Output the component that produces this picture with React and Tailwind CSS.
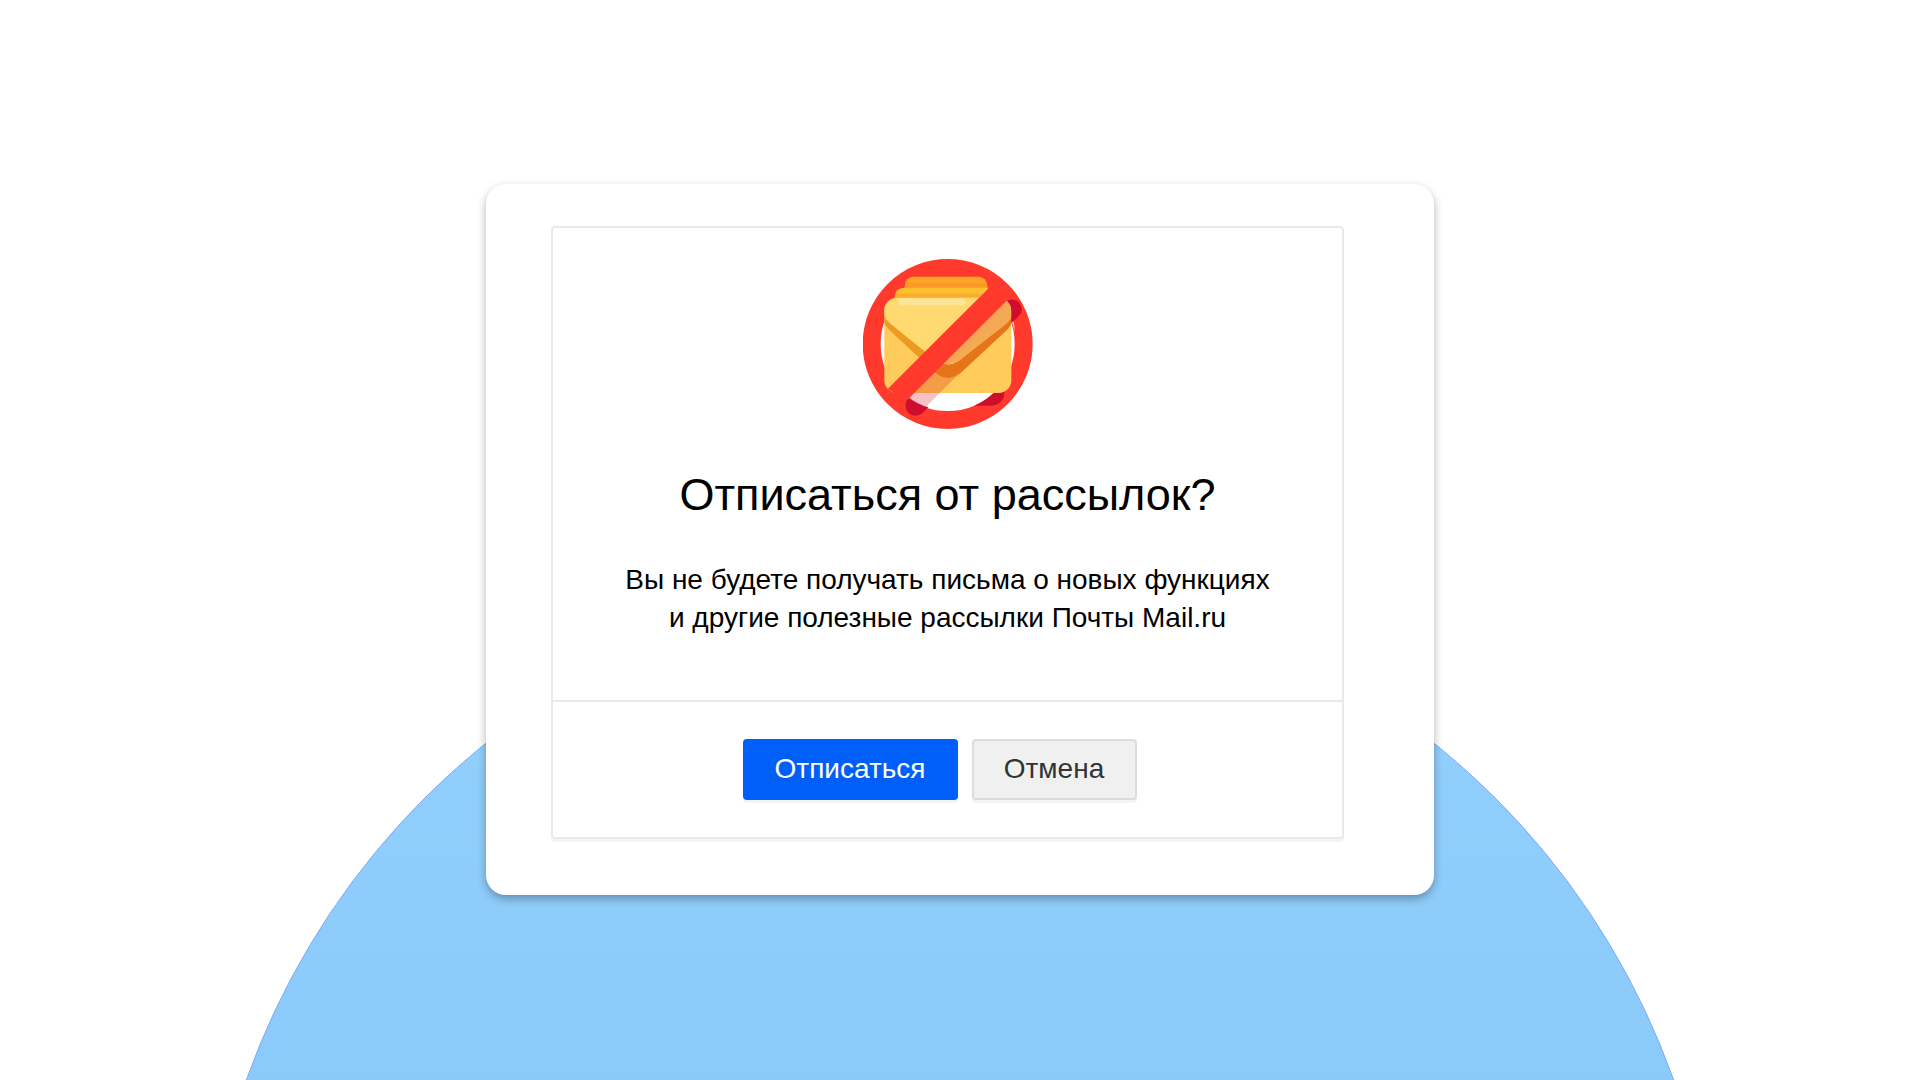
import React from "react";

const NoMailIcon = () => {
  return (
    <svg
      viewBox="38 42 510 510"
      className="w-[170px] h-[170px]"
      aria-hidden="true"
    >
      <defs>
        <clipPath id="ring">
          <path
            clipRule="evenodd"
            d="M292 42a255 255 0 1 0 0.1 0zM292 97a201 201 0 1 1 -0.1 0z"
          />
        </clipPath>
        <linearGradient id="back" x1="0" y1="0" x2="0" y2="1">
          <stop offset="0.45" stopColor="#ffa425" />
          <stop offset="0.6" stopColor="#fb9826" />
        </linearGradient>
        <linearGradient id="middle" x1="0" y1="0" x2="0" y2="1">
          <stop offset="0.45" stopColor="#ffc02d" />
          <stop offset="0.6" stopColor="#f9ad2e" />
        </linearGradient>
      </defs>

      {/* ring */}
      <circle cx="292" cy="297" r="228" fill="none" stroke="#ff3a2d" strokeWidth="54" />
      <g clipPath="url(#ring)">
        <path d="M370 482h54a38 38 0 0 0 38-42h-60z" fill="#cf0d2f" />
      </g>

      {/* letters */}
      <path d="M163 130v-8a27 27 0 0 1 27-27h194a27 27 0 0 1 27 27v8z" fill="url(#back)" />
      <path d="M133 162v-7a27 27 0 0 1 27-27h256l-34 34z" fill="url(#middle)" />
      <rect x="102" y="158" width="381" height="286" rx="38" fill="#ffcb5b" />
      <path
        d="M102 232v-34a40 40 0 0 1 40-40h301a40 40 0 0 1 40 40v36q-3 12-18 25L328 386q-34 26-70 0L118 256q-13-12-16-24z"
        fill="#ed9a22"
      />
      <path
        d="M102 210v-12a40 40 0 0 1 40-40h301a40 40 0 0 1 40 40v12q-1 14-17 27L325 348q-33 22-66 0L120 236q-16-13-18-26z"
        fill="#ffda70"
      />
      <rect x="144" y="160" width="201" height="20" rx="7" fill="#ffe596" />

      {/* shadow of the slash */}
      <path
        d="M483 211v22q-3 12-18 26L328 386q-34 26-70 0l-6-6 22-26q27 11 51-6L466 237q16-12 17-26z"
        fill="#e57518"
      />
      <path d="M468 168q15 11 15 30v13q-1 14-17 27L325 348q-22 14-45 8z" fill="#f5a955" />
      <path d="M252 380l6 6q34 26 66 0l10-8-66 66h-91z" fill="#f49c46" />
      <path d="M179 444h89l-44 44-52-28z" fill="#f4c2c6" />
      <path d="M470 168a29 29 0 0 1 36 45l-23 22v-37q0-18-13-30z" fill="#cf0d2f" />
      <path d="M483 235l7-7q3 17 3 32l-7-26z" fill="#fff" opacity="0.7" />
      <path d="M176 458a29 29 0 1 0 40 47l18-18q-33-10-58-29z" fill="#cf0d2f" />

      {/* slash */}
      <path d="M112 432L422 122l62 30L170 466z" fill="#ff3a2d" />
    </svg>
  );
};

const App = () => {
  return (
    <main className="relative isolate min-h-screen overflow-hidden bg-white px-4 pt-[184px] pb-16 font-['Liberation_Sans',Arial,sans-serif]">
      <div className="absolute -z-10 top-[576px] left-1/2 -translate-x-1/2 w-[1516px] h-[1516px] rounded-full border border-[#7da9ff] bg-linear-to-b from-[#93d1ff] to-[#7cbcec]"></div>

      <section className="mx-auto max-w-[948px] rounded-[20px] bg-white pt-[42px] pr-[90px] pb-[56px] pl-[65px] shadow-[0_4px_10px_rgba(0,0,0,0.3)]">
        <div className="rounded-[4px] border-2 border-[#e9e9e9] text-center shadow-[0_3px_0_#f4f4f4]">
          <div className="flex flex-col items-center pt-[31px] pb-[63px]">
            <NoMailIcon />
            <h1 className="mt-10 text-[45px] leading-[52px] text-black">
              Отписаться от рассылок?
            </h1>
            <p className="mt-[40px] text-[28px] leading-[38px] text-black">
              Вы не будете получать письма о новых функциях
              <br />
              и другие полезные рассылки Почты Mail.ru
            </p>
          </div>

          <div className="flex justify-center gap-[14px] border-t-2 border-[#e9e9e9] py-[37px] pr-4">
            <button
              type="button"
              className="h-[61px] w-[215px] rounded-[4px] bg-[#005ff9] pb-[2px] text-[28px] text-white shadow-[0_3px_0_#f4f4f4]"
            >
              Отписаться
            </button>
            <button
              type="button"
              className="h-[61px] w-[165px] rounded-[4px] border-2 border-[#dcdcdc] bg-[#f0f0f0] pb-[2px] text-[28px] text-[#333] shadow-[0_3px_0_#f4f4f4]"
            >
              Отмена
            </button>
          </div>
        </div>
      </section>
    </main>
  );
};

export default App;
